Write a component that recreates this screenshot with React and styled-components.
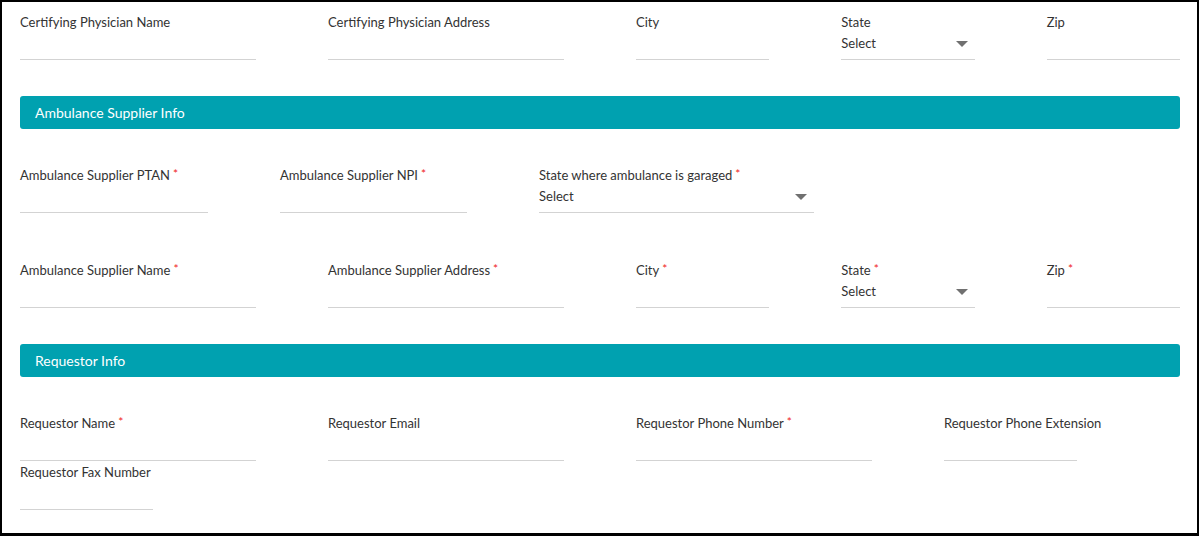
import styled, { createGlobalStyle } from 'styled-components'

const GlobalStyle = createGlobalStyle`
  html, body {
    margin: 0;
    padding: 0;
    background: #fff;
  }
  body {
    font-family: Lato, "Open Sans", sans-serif;
    color: #333;
  }
  * { box-sizing: border-box; }
`

const physicianFields = [
  { label: "Certifying Physician Name", span: 3 },
  { label: "Certifying Physician Address", span: 3 },
  { label: "City", span: 2 },
  { label: "State", span: 2, select: true },
  { label: "Zip", span: 2 },
];

const supplierTop = [
  { label: "Ambulance Supplier PTAN", required: true },
  { label: "Ambulance Supplier NPI", required: true },
  { label: "State where ambulance is garaged", required: true, select: true },
];

const supplierFields = [
  { label: "Ambulance Supplier Name", span: 3, required: true },
  { label: "Ambulance Supplier Address", span: 3, required: true },
  { label: "City", span: 2, required: true },
  { label: "State", span: 2, required: true, select: true },
  { label: "Zip", span: 2, required: true },
];

const requestorFields = [
  { label: "Requestor Name", span: 3, required: true },
  { label: "Requestor Email", span: 3 },
  { label: "Requestor Phone Number", span: 3, required: true },
  { label: "Requestor Phone Extension", span: 2 },
  { label: "Requestor Fax Number", span: 2 },
];

const Field = ({ label, required, select, span }) => (
  <FieldWrapper $span={span}>
    <Label>
      {label}
      {required && <Star>*</Star>}
    </Label>
    <InputLine>
      {select && (
        <>
          <SelectText>Select</SelectText>
          <Caret />
        </>
      )}
    </InputLine>
  </FieldWrapper>
);

const App = () => {
  return (
    <>
      <GlobalStyle />
      <Frame>
        <Grid>
          {physicianFields.map((f) => <Field key={f.label} {...f} />)}
        </Grid>
        <SectionHeader>Ambulance Supplier Info</SectionHeader>
        <TopRow>
          {supplierTop.map((f) => <Field key={f.label} {...f} />)}
        </TopRow>
        <Grid $top={47}>
          {supplierFields.map((f) => <Field key={f.label} {...f} />)}
        </Grid>
        <SectionHeader>Requestor Info</SectionHeader>
        <Grid $rowGap={1}>
          {requestorFields.map((f) => <Field key={f.label} {...f} />)}
        </Grid>
      </Frame>
    </>
  )
}

const Frame = styled.div`
  width: 1199px;
  height: 536px;
  border: 2px solid #000;
  border-bottom-width: 3px;
  padding: 10px 17px 0 18px;
  overflow: hidden;
`

const Grid = styled.div`
  display: grid;
  grid-template-columns: repeat(12, 1fr);
  column-gap: 72px;
  row-gap: ${({ $rowGap }) => $rowGap || 0}px;
  margin-top: ${({ $top }) => $top || 0}px;
`

const TopRow = styled.div`
  display: grid;
  grid-template-columns: 188px 187px 275px;
  column-gap: 72px;
`

const FieldWrapper = styled.div`
  grid-column: span ${({ $span }) => $span || 1};
  display: flex;
  flex-direction: column;
`

const Label = styled.div`
  font-size: 13px;
  line-height: 20px;
  height: 20px;
  white-space: nowrap;
`

const Star = styled.span`
  position: relative;
  top: -2px;
  color: #f01c1c;
  font-size: 12px;
  line-height: 0;
  margin-left: 3px;
`

const InputLine = styled.div`
  position: relative;
  height: 28px;
  border-bottom: 1px solid #d3d3d3;
  display: flex;
  align-items: flex-start;
`

const SelectText = styled.span`
  font-size: 13px;
  line-height: 22px;
`

const Caret = styled.span`
  position: absolute;
  right: 7px;
  top: 9px;
  width: 0;
  height: 0;
  border-left: 6px solid transparent;
  border-right: 6px solid transparent;
  border-top: 6px solid #707070;
`

const SectionHeader = styled.div`
  margin: 36px 0;
  height: 33px;
  background: #00a1b0;
  border-radius: 3px;
  color: #fff;
  font-size: 14px;
  line-height: 33px;
  padding-left: 15px;
`

export default App;
